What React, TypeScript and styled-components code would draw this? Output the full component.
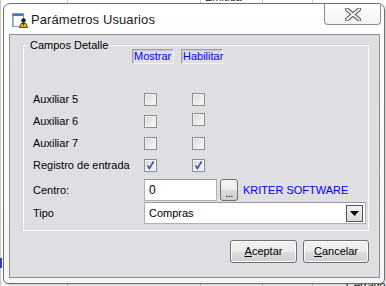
import React from "react";
import styled, { createGlobalStyle } from "styled-components";

const GlobalStyle = createGlobalStyle`
  html, body { margin: 0; padding: 0; background: #ffffff; }
  body { font-family: "Liberation Sans", Arial, sans-serif; font-size: 11px; color: #000; }
  * { box-sizing: border-box; }
`;

const Desktop = styled.div`
  position: relative;
  width: 386px;
  height: 286px;
  overflow: hidden;
  padding: 3px 0 0 3px;
  background:
    linear-gradient(#c8c8c8, #c8c8c8) 67px 0 / 1px 100% no-repeat,
    linear-gradient(#c8c8c8, #c8c8c8) 200px 0 / 1px 100% no-repeat,
    linear-gradient(#c8c8c8, #c8c8c8) 262px 0 / 1px 100% no-repeat,
    linear-gradient(#c8c8c8, #c8c8c8) 312px 0 / 1px 100% no-repeat,
    linear-gradient(#c8c8c8, #c8c8c8) 0 0 / 1px 100% no-repeat,
    #ffffff;
`;

const BackText = styled.span<{ $x: number; $y: number }>`
  position: absolute;
  left: ${(p) => p.$x}px;
  top: ${(p) => p.$y}px;
  font-size: 11px;
  color: #222;
`;

const BlueMark = styled.span`
  position: absolute;
  left: 0;
  top: 258px;
  width: 2px;
  height: 10px;
  background: #2a3bd8;
`;

const Window = styled.div`
  position: relative;
  width: 382px;
  height: 281px;
  border: 1px solid #6f6f6f;
  border-radius: 7px 7px 5px 5px;
  background: linear-gradient(#ffffff, #f6f6f6);
  display: flex;
  flex-direction: column;
  box-shadow: 1px 1px 2px rgba(0, 0, 0, 0.25);
`;

const TitleBar = styled.div`
  height: 30px;
  display: flex;
  align-items: flex-start;
`;

const TitleLeft = styled.div`
  display: flex;
  align-items: center;
  gap: 3px;
  padding: 8px 0 0 8px;
  height: 24px;
`;

const TitleText = styled.span`
  font-family: "Liberation Sans", Arial, sans-serif;
  font-size: 13px;
  color: #1a1a1a;
  line-height: 16px;
  letter-spacing: 0.1px;
`;

const CloseButton = styled.div`
  margin-left: auto;
  margin-right: 3px;
  width: 57px;
  height: 21px;
  border: 1px solid #8c8c8c;
  border-top: none;
  border-radius: 0 0 4px 4px;
  background: linear-gradient(#ffffff, #f3f3f3);
  display: flex;
  align-items: center;
  justify-content: center;
  padding-top: 1px;
`;

const Client = styled.div`
  flex: 1;
  margin: 0 4px 5px 5px;
  border: 1px solid #8d8d8d;
  background: #dfdfe3;
  padding: 10px 10px 0 13px;
  display: flex;
  flex-direction: column;
`;

const GroupBox = styled.div`
  position: relative;
  height: 186px;
  border: 1px solid #ffffff;
  box-shadow: -1px -1px 0 #d2d2d6;
  padding: 3px 1px 0 9px;
  display: flex;
  flex-direction: column;
`;

const Legend = styled.span`
  position: absolute;
  top: -7px;
  left: 4px;
  padding: 0 2px;
  line-height: 13px;
  background: #dfdfe3;
  font-size: 11px;
`;

const HeaderRow = styled.div`
  display: flex;
  gap: 7px;
  margin-left: 99px;
  height: 15px;
`;

const HeaderLabel = styled.span`
  width: 42px;
  height: 15px;
  border: 1px solid #a4a4a4;
  border-right-color: #f4f4f4;
  border-bottom-color: #f4f4f4;
  box-shadow: inset 1px 1px 0 #c4c4c8;
  color: #0000ff;
  font-size: 11px;
  line-height: 13px;
  padding-left: 1px;
  white-space: nowrap;
`;

const Rows = styled.div`
  margin-top: 24px;
  display: flex;
  flex-direction: column;
`;

const Row = styled.div<{ $mt?: number }>`
  display: grid;
  grid-template-columns: 111px 48px 1fr;
  align-items: center;
  height: 22px;
  margin-top: ${(p) => p.$mt ?? 0}px;
`;

const FieldRow = styled.div<{ $mt?: number }>`
  display: grid;
  grid-template-columns: 111px 1fr;
  align-items: center;
  height: 22px;
  margin-top: ${(p) => p.$mt ?? 0}px;
`;

const Label = styled.span`
  font-size: 11px;
  line-height: 13px;
  white-space: nowrap;
`;

const CheckBox = styled.span<{ $up?: boolean }>`
  width: 13px;
  height: 13px;
  border: 1px solid #8e8f8f;
  background: linear-gradient(135deg, #d2d2d2 0%, #e8e8e8 45%, #fbfbfb 100%);
  box-shadow: inset 0 0 0 1px #f4f4f4;
  display: flex;
  align-items: center;
  justify-content: center;
  margin-top: ${(p) => (p.$up ? -3 : 0)}px;
`;

const Inline = styled.div`
  display: flex;
  align-items: center;
`;

const TextInput = styled.div`
  width: 73px;
  height: 22px;
  background: #ffffff;
  border: 1px solid #b0b0b0;
  border-top-color: #9a9a9a;
  font-size: 12px;
  line-height: 20px;
  padding-left: 4px;
`;

const SmallButton = styled.div`
  width: 18px;
  height: 22px;
  margin-left: 3px;
  border: 1px solid #707070;
  border-radius: 3px;
  background: linear-gradient(#f4f4f4 0%, #ececec 50%, #dcdcdc 51%, #cfcfcf 100%);
  font-size: 11px;
  line-height: 26px;
  text-align: center;
  letter-spacing: -0.5px;
`;

const Company = styled.span`
  margin-left: 5px;
  color: #0000ff;
  font-size: 11px;
  white-space: nowrap;
`;

const Combo = styled.div`
  width: 222px;
  height: 22px;
  background: #ffffff;
  border: 1px solid #b0b0b0;
  border-top-color: #9a9a9a;
  display: flex;
  align-items: center;
  padding: 0 2px 0 4px;
  font-size: 11px;
`;

const ComboText = styled.span`
  flex: 1;
`;

const ComboArrow = styled.span`
  width: 17px;
  height: 17px;
  border: 1px solid #555;
  background: linear-gradient(#f2f2f2, #d9d9d9);
  display: flex;
  align-items: center;
  justify-content: center;
`;

const ButtonRow = styled.div`
  margin-top: 9px;
  display: flex;
  justify-content: flex-end;
  gap: 6px;
`;

const Button = styled.div<{ $w: number }>`
  width: ${(p) => p.$w}px;
  height: 23px;
  border: 1px solid #707070;
  border-radius: 3px;
  background: linear-gradient(#f2f2f2 0%, #ebebeb 50%, #dddddd 51%, #cfcfcf 100%);
  box-shadow: inset 0 0 0 1px #fcfcfc;
  font-size: 11px;
  line-height: 21px;
  text-align: center;
`;

const Mnemonic = styled.span`
  text-decoration: underline;
`;

const TitleIcon = () => (
  <svg width="16" height="16" viewBox="0 0 16 16">
    <rect x="0.5" y="1.5" width="11" height="13" fill="#fff" stroke="#8c9aab" />
    <rect x="1" y="2" width="10" height="2" fill="#3d79c7" />
    <rect x="1" y="4" width="1" height="10" fill="#9ec0e8" />
    <circle cx="11.5" cy="8.5" r="2.2" fill="#1b1b1b" />
    <path d="M7.5 15.5 L9 11.5 L14 11.5 L15.5 15.5 Z" fill="#e0b020" stroke="#3a2a00" strokeWidth="0.8" />
    <path d="M11 11.5 L11.5 15 L12 11.5 Z" fill="#1b1b1b" />
  </svg>
);

const CloseGlyph = () => (
  <svg width="16" height="13" viewBox="0 0 16 13">
    <path d="M2 1.5 L14 11.5 M14 1.5 L2 11.5" stroke="#4f5560" strokeWidth="4.2" strokeLinecap="square" />
    <path d="M2 1.5 L14 11.5 M14 1.5 L2 11.5" stroke="#eef0f2" strokeWidth="2" strokeLinecap="square" />
  </svg>
);

const Check = () => (
  <svg width="11" height="11" viewBox="0 0 11 11">
    <path d="M2.5 5.5 L4.5 8.5 L8.5 1.5" fill="none" stroke="#3e56a8" strokeWidth="1.6" />
  </svg>
);

const Arrow = () => (
  <svg width="9" height="5" viewBox="0 0 9 5">
    <path d="M0 0 L9 0 L4.5 5 Z" fill="#000" />
  </svg>
);

type CheckRow = { label: string; show: boolean; enable: boolean; up?: boolean };

const rows: CheckRow[] = [
  { label: "Auxiliar 5", show: false, enable: false },
  { label: "Auxiliar 6", show: false, enable: false, up: true },
  { label: "Auxiliar 7", show: false, enable: false },
  { label: "Registro de entrada", show: true, enable: true },
];

export default function App() {
  return (
    <>
      <GlobalStyle />
      <Desktop>
        <BackText $x={205} $y={-9}>Emitida</BackText>
        <BackText $x={346} $y={279}>Cerrado</BackText>
        <BlueMark />
        <Window>
          <TitleBar>
            <TitleLeft>
              <TitleIcon />
              <TitleText>Parámetros Usuarios</TitleText>
            </TitleLeft>
            <CloseButton>
              <CloseGlyph />
            </CloseButton>
          </TitleBar>
          <Client>
            <GroupBox>
              <Legend>Campos Detalle</Legend>
              <HeaderRow>
                <HeaderLabel>Mostrar</HeaderLabel>
                <HeaderLabel>Habilitar</HeaderLabel>
              </HeaderRow>
              <Rows>
                {rows.map((r) => (
                  <Row key={r.label}>
                    <Label>{r.label}</Label>
                    <CheckBox>{r.show && <Check />}</CheckBox>
                    <CheckBox $up={r.up}>{r.enable && <Check />}</CheckBox>
                  </Row>
                ))}
                <FieldRow $mt={3}>
                  <Label>Centro:</Label>
                  <Inline>
                    <TextInput>0</TextInput>
                    <SmallButton>...</SmallButton>
                    <Company>KRITER SOFTWARE</Company>
                  </Inline>
                </FieldRow>
                <FieldRow $mt={1}>
                  <Label>Tipo</Label>
                  <Combo>
                    <ComboText>Compras</ComboText>
                    <ComboArrow>
                      <Arrow />
                    </ComboArrow>
                  </Combo>
                </FieldRow>
              </Rows>
            </GroupBox>
            <ButtonRow>
              <Button $w={67}>
                <Mnemonic>A</Mnemonic>ceptar
              </Button>
              <Button $w={66}>
                <Mnemonic>C</Mnemonic>ancelar
              </Button>
            </ButtonRow>
          </Client>
        </Window>
      </Desktop>
    </>
  );
}
